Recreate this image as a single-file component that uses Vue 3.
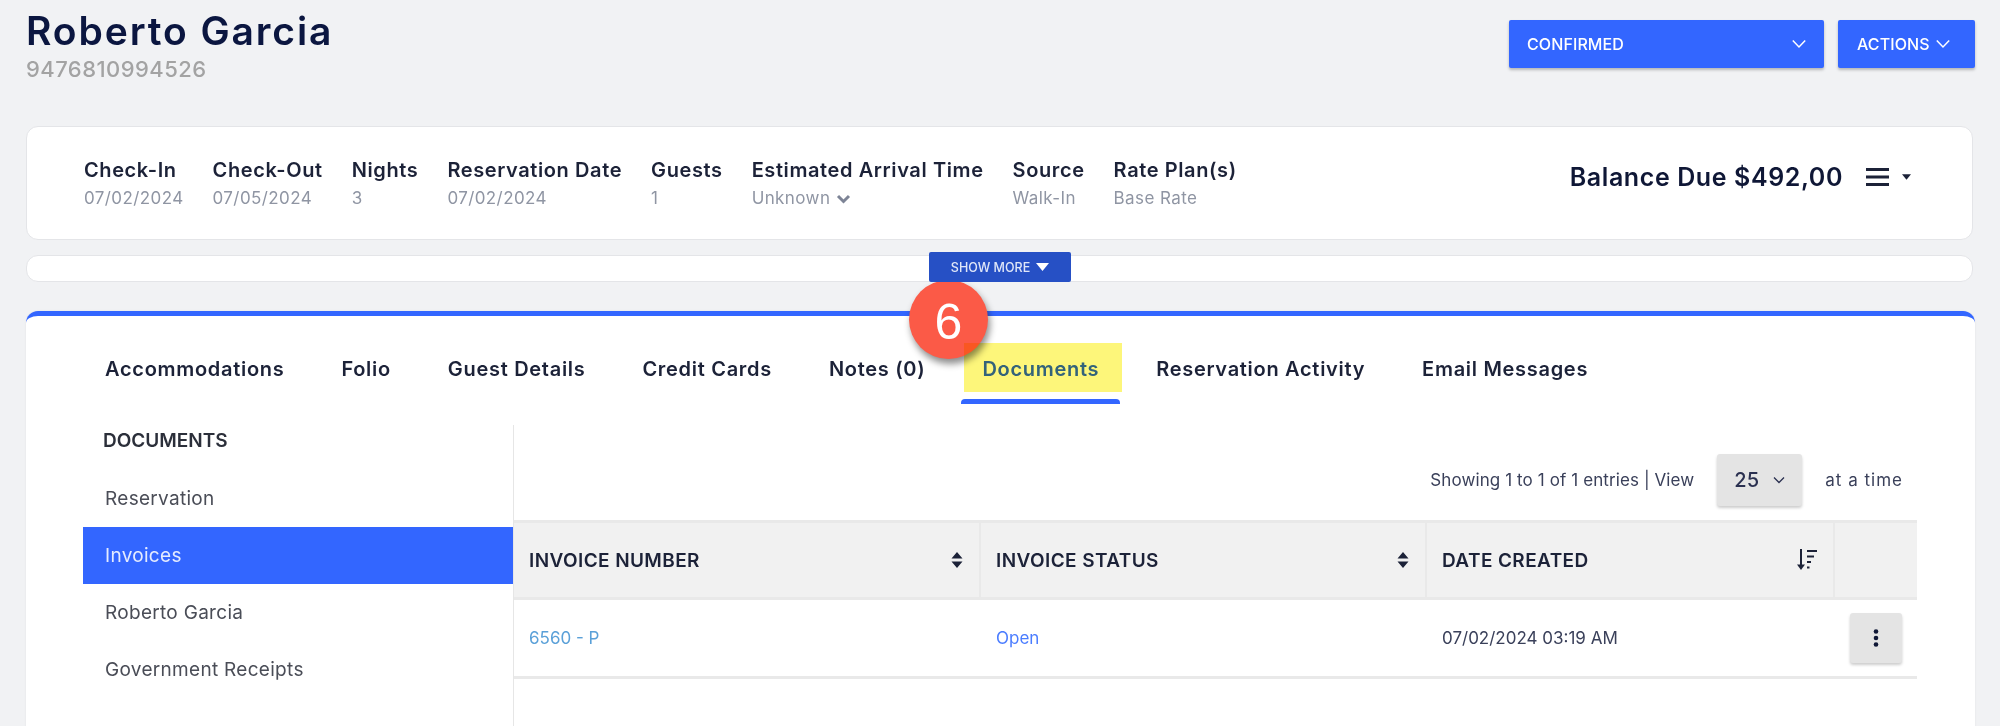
<script setup>
const stats = [
  { label: 'Check-In', value: '07/02/2024' },
  { label: 'Check-Out', value: '07/05/2024' },
  { label: 'Nights', value: '3' },
  { label: 'Reservation Date', value: '07/02/2024' },
  { label: 'Guests', value: '1' },
  { label: 'Estimated Arrival Time', value: 'Unknown', chevron: true },
  { label: 'Source', value: 'Walk-In' },
  { label: 'Rate Plan(s)', value: 'Base Rate' }
]
const tabs = ['Accommodations', 'Folio', 'Guest Details', 'Credit Cards', 'Notes (0)', 'Documents', 'Reservation Activity', 'Email Messages']
const sideItems = ['Reservation', 'Invoices', 'Roberto Garcia', 'Government Receipts']
</script>

<template>
  <div class="page">
    <header class="head">
      <div>
        <h1 class="name">Roberto Garcia</h1>
        <div class="phone">9476810994526</div>
      </div>
      <div class="head-btns">
        <button class="btn btn-status">
          <span>CONFIRMED</span>
          <svg width="14" height="10" viewBox="0 0 14 10"><path d="M.8 1.500 7 8l6.200-6.500" fill="none" stroke="#fff" stroke-width="1.500"/></svg>
        </button>
        <button class="btn btn-actions">
          <span>ACTIONS</span>
          <svg width="14" height="10" viewBox="0 0 14 10"><path d="M.8 1.500 7 8l6.200-6.500" fill="none" stroke="#fff" stroke-width="1.500"/></svg>
        </button>
      </div>
    </header>

    <section class="card summary">
      <div class="stats">
        <div v-for="s in stats" :key="s.label" class="stat">
          <div class="stat-label">{{ s.label }}</div>
          <div class="stat-value">
            {{ s.value }}
            <svg v-if="s.chevron" width="15" height="12" viewBox="0 0 15 12"><path d="M2 3l5.500 5.500L13 3" fill="none" stroke="#7d8496" stroke-width="3"/></svg>
          </div>
        </div>
      </div>
      <div class="balance">
        <span>Balance Due $492,00</span>
        <svg class="burger" width="23" height="20" viewBox="0 0 23 20"><path d="M0 2.500h23M0 10h23M0 17.500h23" stroke="#1c2238" stroke-width="3"/></svg>
        <svg width="9" height="6" viewBox="0 0 10 6"><path d="M0 0h10L5 6z" fill="#1c2238"/></svg>
      </div>
    </section>

    <section class="card more">
      <button class="show-more">
        <span>SHOW MORE</span>
        <svg width="13" height="8" viewBox="0 0 13 8"><path d="M0 0h13L6.500 8z" fill="#fff"/></svg>
      </button>
    </section>

    <section class="main">
      <div class="badge">6</div>
      <nav class="tabs">
        <div v-for="t in tabs" :key="t" class="tab" :class="{ active: t === 'Documents' }">{{ t }}</div>
      </nav>
      <div class="body">
        <aside class="side">
          <div class="side-title">DOCUMENTS</div>
          <div v-for="i in sideItems" :key="i" class="side-item" :class="{ on: i === 'Invoices' }">{{ i }}</div>
        </aside>
        <div class="content">
          <div class="toolbar">
            <span>Showing 1 to 1 of 1 entries | View</span>
            <div class="select">
              <span>25</span>
              <svg width="12" height="8" viewBox="0 0 12 8"><path d="M1 1.500l5 5 5-5" fill="none" stroke="#2a3050" stroke-width="1.300"/></svg>
            </div>
            <span class="at-time">at a time</span>
          </div>
          <div class="table">
            <div class="th">
              <span>INVOICE NUMBER</span>
              <svg width="12" height="16" viewBox="0 0 12 16"><path d="M6 0l5.500 6.500H.5zM6 16l5.500-6.500H.5z" fill="#1c2238"/></svg>
            </div>
            <div class="th">
              <span>INVOICE STATUS</span>
              <svg width="12" height="16" viewBox="0 0 12 16"><path d="M6 0l5.500 6.500H.5zM6 16l5.500-6.500H.5z" fill="#1c2238"/></svg>
            </div>
            <div class="th">
              <span>DATE CREATED</span>
              <svg width="20" height="22" viewBox="0 0 20 22"><path d="M4 0v18" stroke="#1c2238" stroke-width="2"/><path d="M0 15.500h8L4 21z" fill="#1c2238"/><path d="M10 2h10M10 7.500h7M10 13h4M10 18.500h2.500" stroke="#1c2238" stroke-width="2.200"/></svg>
            </div>
            <div class="th last"></div>
            <div class="td"><span class="link">6560 - P</span></div>
            <div class="td"><span class="open">Open</span></div>
            <div class="td date">07/02/2024 03:19 AM</div>
            <div class="td kebab-cell">
              <div class="kebab">
                <svg width="6" height="18" viewBox="0 0 6 18"><circle cx="3" cy="2.500" r="2.300"/><circle cx="3" cy="9" r="2.300"/><circle cx="3" cy="15.500" r="2.300"/></svg>
              </div>
            </div>
          </div>
        </div>
      </div>
    </section>
  </div>
</template>

<style>
html, body { margin: 0; overflow: hidden; background: #f1f2f4; }
</style>

<style scoped>
.page {
  width: 2000px;
  height: 726px;
  overflow: hidden;
  background: #f1f2f4;
  font-family: Inter, "Liberation Sans", sans-serif;
  color: #1c2238;
  box-sizing: border-box;
  padding-left: 26px;
}
.head {
  height: 126px;
  box-sizing: border-box;
  display: flex;
  justify-content: space-between;
  align-items: flex-start;
  width: 1949px;
}
.name {
  margin: 9px 0 0;
  font-size: 39px;
  line-height: 44px;
  font-weight: 600;
  color: #0b1640;
  letter-spacing: 1.900px;
}
.phone {
  font-size: 22px;
  line-height: 26px;
  margin-top: 3px;
  color: #a3a3a3;
  font-weight: 500;
  letter-spacing: .45px;
}
.head-btns { display: flex; gap: 14px; margin-top: 20px; }
.btn {
  height: 48px;
  border: 0;
  border-radius: 2px;
  background: #3366ff;
  color: #fff;
  font: 500 16px Inter, sans-serif;
  letter-spacing: .1px;
  display: flex;
  align-items: center;
  justify-content: space-between;
  box-shadow: 0 2px 3px rgba(0, 0, 0, .25);
}
.btn-status { width: 315px; padding: 0 18px 0 18px; }
.btn-actions { width: 137px; padding: 0 23px 0 19px; justify-content: flex-start; gap: 6px; }
.card {
  width: 1947px;
  box-sizing: border-box;
  background: #fff;
  border: 1px solid #e4e5e8;
  border-radius: 12px;
}
.summary {
  height: 114px;
  display: flex;
  justify-content: space-between;
  align-items: flex-start;
  padding: 30px 61px 0 57px;
}
.stats { display: flex; gap: 29px; }
.stat-label { font-size: 20px; letter-spacing: .6px; font-weight: 600; line-height: 26px; color: #1c2238; white-space: nowrap; }
.stat-value { font-size: 17px; letter-spacing: .4px; line-height: 28px; margin-top: 1px; color: #8f95a3; white-space: nowrap; }
.stat-value svg { vertical-align: -1px; }
.balance {
  display: flex;
  align-items: center;
  font-size: 25px;
  letter-spacing: .6px;
  font-weight: 600;
  line-height: 32px;
  color: #0f1736;
  margin-top: 4px;
}
.burger { margin: 0 13px 0 23px; }
.more {
  height: 27px;
  margin-top: 15px;
  display: flex;
  justify-content: center;
}
.show-more {
  width: 142px;
  height: 30px;
  margin-top: -4px;
  margin-left: 1px;
  border: 0;
  border-radius: 2px;
  background: #2650c5;
  color: #dfe6f8;
  font: 500 12.500px Inter, sans-serif;
  display: flex;
  align-items: center;
  justify-content: center;
  gap: 6px;
  padding: 0;
  position: relative;
  z-index: 2;
}
.main {
  position: relative;
  margin-top: 29px;
  width: 1949px;
  height: 500px;
  box-sizing: border-box;
  background: #fff;
  border-top: 5px solid #3366ff;
  border-radius: 12px 12px 0 0;
  box-shadow: 0 0 2px rgba(0, 0, 0, .08);
}
.badge {
  position: absolute;
  left: 883px;
  top: -36px;
  width: 79px;
  height: 79px;
  border-radius: 50%;
  background: #fb5a47;
  color: #fff;
  font: 400 50px/85px "Liberation Sans", sans-serif;
  text-align: center;
  box-shadow: 2px 5px 7px rgba(0, 0, 0, .45);
  z-index: 1;
}
.tabs {
  display: flex;
  gap: 57px;
  padding: 38px 0 0 79px;
  height: 70px;
  box-sizing: content-box;
}
.tab {
  font-size: 20px;
  letter-spacing: .7px;
  font-weight: 600;
  line-height: 30px;
  white-space: nowrap;
  color: #1c2238;
  position: relative;
}
.tab.active { color: #3366ff; }
.tab.active::before {
  content: "";
  position: absolute;
  left: -18px;
  right: -23px;
  top: -11px;
  height: 49px;
  background: #fdf67a;
  mix-blend-mode: multiply;
  z-index: 2;
}
.tab.active::after {
  content: "";
  position: absolute;
  left: -21px;
  right: -21px;
  top: 45px;
  height: 5px;
  background: #3366ff;
  border-radius: 4px 4px 0 0;
}
.body {
  display: flex;
  margin: 1px 0 0 57px;
  width: 1834px;
}
.side { width: 431px; box-sizing: border-box; border-right: 1px solid #e6e6e6; height: 400px; }
.side-title {
  height: 45px;
  padding: 2px 0 0 20px;
  box-sizing: border-box;
  font-size: 19px;
  line-height: 28px;
  font-weight: 600;
  color: #2b2f3a;
}
.side-item {
  height: 57px;
  line-height: 57px;
  padding-left: 22px;
  font-size: 19px;
  letter-spacing: .3px;
  color: #4a4d57;
}
.side-item.on { background: #3366ff; color: #e4ebff; }
.content { flex: 1; min-width: 0; }
.toolbar {
  height: 95px;
  box-sizing: border-box;
  padding: 29px 14px 0 0;
  display: flex;
  justify-content: flex-end;
  align-items: flex-start;
  font-size: 17px;
  letter-spacing: .1px;
  line-height: 52px;
  color: #3a405a;
  gap: 23px;
}
.at-time { letter-spacing: 1px; }
.select {
  width: 85px;
  height: 52px;
  border-radius: 3px;
  background: #e4e4e4;
  box-shadow: 0 2px 3px rgba(0, 0, 0, .2);
  display: flex;
  align-items: center;
  justify-content: center;
  gap: 14px;
  font-size: 20px;
  font-weight: 500;
  color: #2a3050;
}
.table { display: grid; grid-template-columns: 467px 446px 408px 82px; }
.th {
  height: 80px;
  box-sizing: border-box;
  background: #f1f1f1;
  border-top: 3px solid #e9e9e9;
  border-bottom: 3px solid #e9e9e9;
  border-right: 2px solid #e9e9e9;
  padding: 0 16px 0 15px;
  display: flex;
  align-items: center;
  justify-content: space-between;
  font-size: 19px;
  letter-spacing: .4px;
  font-weight: 600;
  color: #1c2238;
}
.th.last { border-right: 0; }
.td {
  height: 79px;
  box-sizing: border-box;
  border-bottom: 3px solid #e9e9e9;
  padding: 0 15px;
  display: flex;
  align-items: center;
  font-size: 17px;
}
.link { color: #5aa0d8; }
.open { color: #4a7cff; }
.date { color: #3a405a; }
.kebab-cell { padding: 0 15px; justify-content: flex-end; }
.kebab {
  width: 52px;
  height: 50px;
  border-radius: 3px;
  background: #e4e4e4;
  box-shadow: 0 2px 3px rgba(0, 0, 0, .2);
  display: flex;
  align-items: center;
  justify-content: center;
}
.kebab svg { fill: #0f1736; }
</style>
